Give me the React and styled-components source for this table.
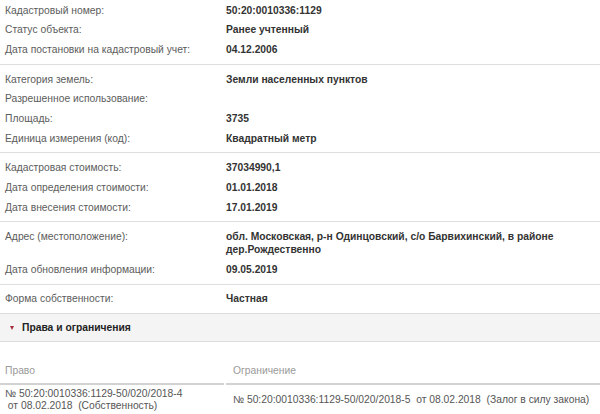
import React from "react";
import styled, { createGlobalStyle } from "styled-components";

const Global = createGlobalStyle`
  html, body { margin: 0; padding: 0; background: #fff; }
  body { font-family: "Liberation Sans", Arial, sans-serif; font-size: 10.3px; }
`;

const Page = styled.div`
  width: 600px;
  height: 414px;
  overflow: hidden;
  background: #fff;
`;

const Group = styled.div`
  padding: ${(p) => (p.$first ? "0.3px" : "4.45px")} 0 4.45px;
  border-bottom: 1px solid #dedede;
`;

const Row = styled.div`
  display: grid;
  grid-template-columns: 226px 1fr;
  padding: 3.35px 0;
  line-height: 13px;
`;

const Label = styled.div`
  padding-left: 5px;
  color: #5c5c5c;
`;

const Value = styled.div`
  color: #333;
  font-weight: bold;
`;

const Band = styled.div`
  display: flex;
  align-items: center;
  height: 27px;
  background: #f4f4f4;
  border-bottom: 1px solid #dcdcdc;
  padding-left: 10px;
  gap: 8px;
`;

const Caret = styled.span`
  width: 0;
  height: 0;
  border-left: 2.5px solid transparent;
  border-right: 2.5px solid transparent;
  border-top: 4px solid #a3303f;
  margin-top: 1px;
`;

const BandTitle = styled.span`
  font-weight: bold;
  color: #222;
`;

const Table = styled.div`
  margin-top: 22px;
  display: grid;
  grid-template-columns: 224px 1fr;
  column-gap: 2px;
`;

const HeadCell = styled.div`
  color: #9a9a9a;
  line-height: 13px;
  padding: 0 0 6.3px ${(p) => p.$pad}px;
  border-bottom: 2px solid #d2d2d2;
`;

const Cell = styled.div`
  color: #555;
  line-height: 11.5px;
  padding: 3px 0 3px ${(p) => p.$pad}px;
  white-space: pre;
  align-self: center;
`;

const groups = [
  [
    ["Кадастровый номер:", "50:20:0010336:1129"],
    ["Статус объекта:", "Ранее учтенный"],
    ["Дата постановки на кадастровый учет:", "04.12.2006"],
  ],
  [
    ["Категория земель:", "Земли населенных пунктов"],
    ["Разрешенное использование:", ""],
    ["Площадь:", "3735"],
    ["Единица измерения (код):", "Квадратный метр"],
  ],
  [
    ["Кадастровая стоимость:", "37034990,1"],
    ["Дата определения стоимости:", "01.01.2018"],
    ["Дата внесения стоимости:", "17.01.2019"],
  ],
  [
    [
      "Адрес (местоположение):",
      <>
        обл. Московская, р-н Одинцовский, с/о Барвихинский, в районе
        <br />
        дер.Рождественно
      </>,
    ],
    ["Дата обновления информации:", "09.05.2019"],
  ],
  [["Форма собственности:", "Частная"]],
];

export default function App() {
  return (
    <Page>
      <Global />
      {groups.map((g, i) => (
        <Group key={i} $first={i === 0}>
          {g.map(([l, v], j) => (
            <Row key={j}>
              <Label>{l}</Label>
              <Value>{v}</Value>
            </Row>
          ))}
        </Group>
      ))}
      <Band>
        <Caret />
        <BandTitle>Права и ограничения</BandTitle>
      </Band>
      <Table>
        <HeadCell $pad={5}>Право</HeadCell>
        <HeadCell $pad={7}>Ограничение</HeadCell>
        <Cell $pad={5}>
          {"№ 50:20:0010336:1129-50/020/2018-4\n от 08.02.2018  (Собственность)"}
        </Cell>
        <Cell $pad={7}>
          {"№ 50:20:0010336:1129-50/020/2018-5  от 08.02.2018  (Залог в силу закона)"}
        </Cell>
      </Table>
    </Page>
  );
}
